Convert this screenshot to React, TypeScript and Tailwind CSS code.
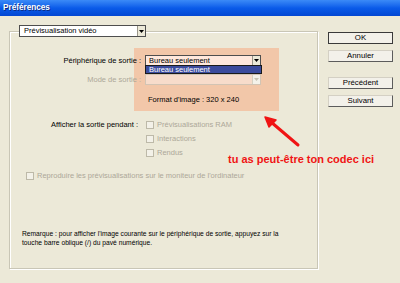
import React from 'react';

const font = "font-['Liberation_Sans',Arial,sans-serif]";

const Arrow = ({ disabled = false }: { disabled?: boolean }) => (
  <div
    className={`w-[8px] h-full flex items-center justify-center border-l ${
      disabled ? 'border-[#d6d2c2] bg-[#f4f2ea]' : 'border-[#9a978a] bg-[#ece9d8]'
    }`}
  >
    <svg width="5" height="3" viewBox="0 0 5 3">
      <path d="M0 0h5L2.5 3z" fill={disabled ? '#c8c4b4' : '#000'} />
    </svg>
  </div>
);

const Checkbox = () => (
  <div className="w-[8px] h-[8px] border border-[#bdb9a8] bg-[#f3f1e8] shrink-0" />
);

const Button = ({ label, primary = false }: { label: string; primary?: boolean }) => (
  <button
    className={`w-[65px] h-[12px] flex items-center justify-center text-[7.8px] text-black bg-[#f3f1ea] border ${
      primary
        ? 'border-[#3a3a3a]'
        : 'border-t-[#d4d0c4] border-l-[#d4d0c4] border-b-[#5c5c5c] border-r-[#5c5c5c]'
    }`}
  >
    {label}
  </button>
);

export default function App() {
  return (
    <div className={`relative w-[400px] h-[283px] overflow-hidden bg-[#ece9d8] ${font}`}>
      {/* title bar */}
      <div className="h-[16px] bg-gradient-to-b from-[#3b8af7] via-[#0a5be9] to-[#0447d2] flex items-center pl-[3px]">
        <span className="text-white font-bold text-[8.2px] [text-shadow:1px_1px_0_#0b2a80]">Préférences</span>
      </div>

      <div className="flex">
        {/* group box */}
        <div className="relative ml-[9px] mt-[15px] w-[309px] h-[238px] border border-[#c9c6b6] shadow-[inset_1px_1px_0_#ffffff,1px_1px_0_#ffffff]">
          {/* highlighter annotation */}
          <div className="absolute left-[124px] top-[16px] w-[145px] h-[63px] bg-[#f2c7a9]" />

          <div className="relative flex flex-col text-[7.5px] leading-[10px]">
            <div className="-mt-[7px] ml-[9px] w-[127px] h-[12px] flex bg-white border border-[#4e4e4e]">
              <span className="flex-1 pl-[4px] leading-[10px] text-black">Prévisualisation vidéo</span>
              <Arrow />
            </div>

            <div className="mt-[18px] flex items-center h-[11px]">
              <span className="w-[131px] text-right text-black">Périphérique de sortie :</span>
              <div className="ml-[4px] w-[116px] h-[11px] flex bg-[#ffe8dc] border border-[#4e4e4e]">
                <span className="flex-1 pl-[3px] leading-[9px] text-black">Bureau seulement</span>
                <Arrow />
              </div>
            </div>

            <div className="mt-[8px] flex items-center h-[11px]">
              <span className="w-[131px] text-right text-[#aca899]">Mode de sortie :</span>
              <div className="ml-[4px] w-[116px] h-[11px] flex bg-[#f7dccb] border border-[#d2c4b4]">
                <span className="flex-1" />
                <Arrow disabled />
              </div>
            </div>

            <div className="mt-[10px] h-[10px] pl-[138px] text-black">Format d'image : 320 x 240</div>

            <div className="mt-[15px] flex items-center h-[10px]">
              <span className="w-[128px] text-right text-black">Afficher la sortie pendant :</span>
              <div className="ml-[8px] flex items-center gap-[3px]">
                <Checkbox />
                <span className="text-[#aca899]">Prévisualisations RAM</span>
              </div>
            </div>
            <div className="mt-[4px] flex items-center gap-[3px] h-[10px] pl-[136px]">
              <Checkbox />
              <span className="text-[#aca899]">Interactions</span>
            </div>
            <div className="mt-[4px] flex items-center gap-[3px] h-[10px] pl-[136px]">
              <Checkbox />
              <span className="text-[#aca899]">Rendus</span>
            </div>

            <div className="mt-[13px] flex items-center gap-[3px] h-[10px] pl-[16px]">
              <Checkbox />
              <span className="text-[#aca899]">Reproduire les prévisualisations sur le moniteur de l'ordinateur</span>
            </div>

            <div className="mt-[48px] pl-[12px] text-[6.7px] leading-[9px] text-black">
              <div>Remarque : pour afficher l'image courante sur le périphérique de sortie, appuyez sur la</div>
              <div>touche barre oblique (/) du pavé numérique.</div>
            </div>
          </div>

          {/* open dropdown list */}
          <div className="absolute left-[135px] top-[33px] w-[117px] h-[9px] bg-[#3b4b9d] border border-[#1a1a1a] flex items-center pl-[3px] text-[7.5px] text-white leading-[8px]">
            Bureau seulement
          </div>
        </div>

        {/* buttons */}
        <div className="ml-[10px] mt-[16px] flex flex-col">
          <Button label="OK" primary />
          <div className="mt-[6px]">
            <Button label="Annuler" />
          </div>
          <div className="mt-[15px]">
            <Button label="Précédent" />
          </div>
          <div className="mt-[6px]">
            <Button label="Suivant" />
          </div>
        </div>
      </div>

      {/* red annotation */}
      <svg className="absolute left-0 top-0" width="400" height="283" viewBox="0 0 400 283">
        <line x1="298" y1="145" x2="271" y2="122" stroke="#f01414" strokeWidth="3" strokeLinecap="round" />
        <path d="M265 117 L276 120 L269 127 Z" fill="#f01414" stroke="#f01414" strokeWidth="1.5" strokeLinejoin="round" />
      </svg>
      <div className="absolute left-[228px] top-[152px] text-[11px] leading-[14px] font-bold text-[#f01414]">
        tu as peut-être ton codec ici
      </div>
    </div>
  );
}
